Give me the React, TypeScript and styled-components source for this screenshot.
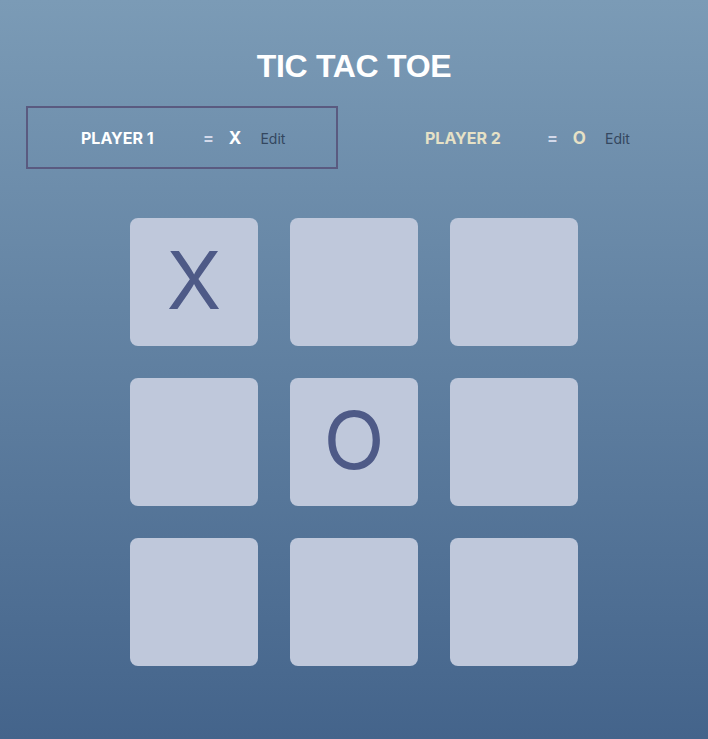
import React from "react";
import styled, { createGlobalStyle } from "styled-components";

const Global = createGlobalStyle`
  html, body { margin: 0; padding: 0; }
  body {
    min-height: 100vh;
    background: linear-gradient(180deg, #7b9bb6 0%, #44648b 100%);
    font-family: "Inter", "Liberation Sans", sans-serif;
  }
`;

const Page = styled.main`
  min-height: 739px;
  display: flex;
  flex-direction: column;
  align-items: center;
  padding-top: 48px;
  box-sizing: border-box;
`;

const Title = styled.h1`
  margin: 0;
  font-family: "Liberation Sans", Arial, sans-serif;
  font-weight: 700;
  font-size: 32px;
  line-height: 37px;
  color: #ffffff;
  letter-spacing: -0.3px;
`;

const Players = styled.section`
  display: flex;
  gap: 32px;
  margin-top: 21px;
`;

const PlayerBox = styled.div<{ $active?: boolean }>`
  width: 312px;
  height: 63px;
  box-sizing: border-box;
  border: 2px solid ${(p) => (p.$active ? "#5a5a80" : "transparent")};
  display: flex;
  align-items: center;
  padding-left: 53px;
  padding-top: 1px;
`;

const Label = styled.span<{ $color: string }>`
  font-weight: 700;
  font-size: 16px;
  color: ${(p) => p.$color};
  width: 122px;
`;

const Equals = styled.span`
  font-weight: 700;
  font-size: 16px;
  color: #d3d9ea;
  margin-right: 15px;
`;

const Symbol = styled.span<{ $color: string }>`
  font-weight: 700;
  font-size: 17px;
  color: ${(p) => p.$color};
  margin-right: 19px;
`;

const EditButton = styled.button`
  background: none;
  border: none;
  padding: 0;
  font-family: "Inter", sans-serif;
  font-size: 14px;
  color: #34475f;
  cursor: pointer;
`;

const Board = styled.div`
  display: grid;
  grid-template-columns: repeat(3, 128px);
  grid-auto-rows: 128px;
  gap: 32px;
  margin-top: 49px;
`;

const Cell = styled.button`
  background: #bfc8db;
  border: none;
  border-radius: 8px;
  padding: 0 0 4px 0;
  display: flex;
  align-items: center;
  justify-content: center;
  font-family: "Inter", sans-serif;
  font-weight: 400;
  font-size: 80px;
  line-height: 1;
  color: #4e5a87;
`;

const cells = ["X", "", "", "", "O", "", "", "", ""];

export default function App() {
  return (
    <>
      <Global />
      <Page>
        <Title>TIC TAC TOE</Title>
        <Players>
          <PlayerBox $active>
            <Label $color="#ffffff">PLAYER 1</Label>
            <Equals>=</Equals>
            <Symbol $color="#ffffff">X</Symbol>
            <EditButton>Edit</EditButton>
          </PlayerBox>
          <PlayerBox>
            <Label $color="#e6e1c6">PLAYER 2</Label>
            <Equals>=</Equals>
            <Symbol $color="#e6e1c6">O</Symbol>
            <EditButton>Edit</EditButton>
          </PlayerBox>
        </Players>
        <Board>
          {cells.map((c, i) => (
            <Cell key={i}>{c}</Cell>
          ))}
        </Board>
      </Page>
    </>
  );
}
